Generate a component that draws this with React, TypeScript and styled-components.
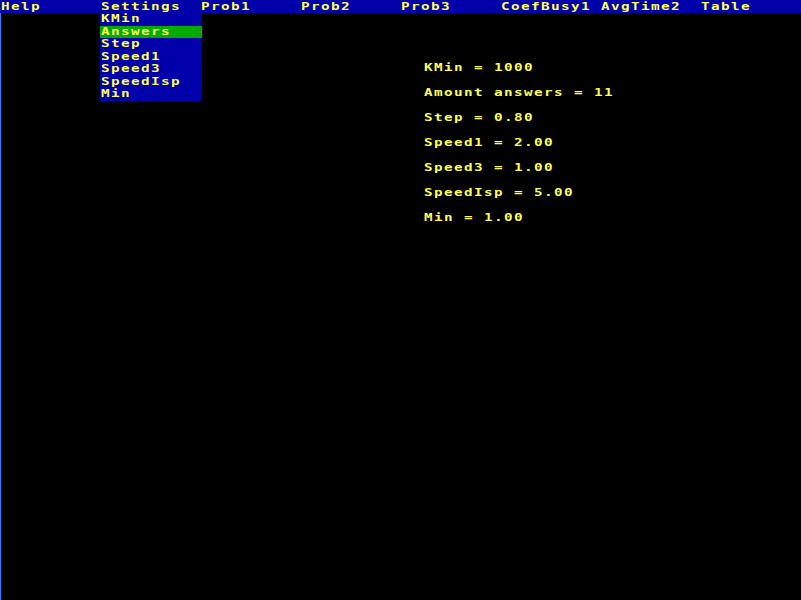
import React from "react";
import styled, { createGlobalStyle } from "styled-components";

const Global = createGlobalStyle`
  html, body { margin: 0; padding: 0; background: #000; }
  body { width: 801px; height: 600px; overflow: hidden; }
  #root { width: 801px; height: 600px; }
`;

const YELLOW = "#ffff55";
const BLUE = "#0000aa";

const Screen = styled.div`
  position: relative;
  width: 801px;
  height: 600px;
  background: #000;
  display: flex;
  flex-direction: column;
  font-family: "DejaVu Sans Mono", "Liberation Mono", monospace;
  font-weight: bold;
  font-size: 11px;
  color: ${YELLOW};
  white-space: pre;
`;

const Txt = styled.span`
  display: inline-block;
  letter-spacing: 1.07px;
  transform: scaleX(1.3);
  transform-origin: 0 50%;
`;

const MenuBar = styled.div`
  height: 13px;
  background: ${BLUE};
  display: flex;
  padding-left: 1px;
  line-height: 13px;
  flex-shrink: 0;
`;

const MenuItem = styled.div`
  width: 100px;
  flex-shrink: 0;
`;

const Body = styled.div`
  flex: 1;
  border-left: 1px solid #2a7fff;
  padding: 42px 0 0 423px;
  display: flex;
  flex-direction: column;
`;

const Line = styled.div`
  line-height: 25px;
`;

const Dropdown = styled.div`
  position: absolute;
  left: 100px;
  top: 13px;
  width: 102px;
  background: ${BLUE};
  display: flex;
  flex-direction: column;
`;

const DropItem = styled.div<{ $active?: boolean }>`
  height: 12.5px;
  line-height: 12px;
  padding-left: 1px;
  background: ${(p) => (p.$active ? "#00aa00" : "transparent")};
`;

const menu = ["Help", "Settings", "Prob1", "Prob2", "Prob3", "CoefBusy1", "AvgTime2", "Table"];
const drop = ["KMin", "Answers", "Step", "Speed1", "Speed3", "SpeedIsp", "Min"];
const lines = [
  "KMin = 1000",
  "Amount answers = 11",
  "Step = 0.80",
  "Speed1 = 2.00",
  "Speed3 = 1.00",
  "SpeedIsp = 5.00",
  "Min = 1.00",
];

export default function App() {
  return (
    <>
      <Global />
      <Screen>
        <MenuBar>
          {menu.map((m) => (
            <MenuItem key={m}>
              <Txt>{m}</Txt>
            </MenuItem>
          ))}
        </MenuBar>
        <Body>
          {lines.map((l) => (
            <Line key={l}>
              <Txt>{l}</Txt>
            </Line>
          ))}
        </Body>
        <Dropdown>
          {drop.map((d) => (
            <DropItem key={d} $active={d === "Answers"}>
              <Txt>{d}</Txt>
            </DropItem>
          ))}
        </Dropdown>
      </Screen>
    </>
  );
}
